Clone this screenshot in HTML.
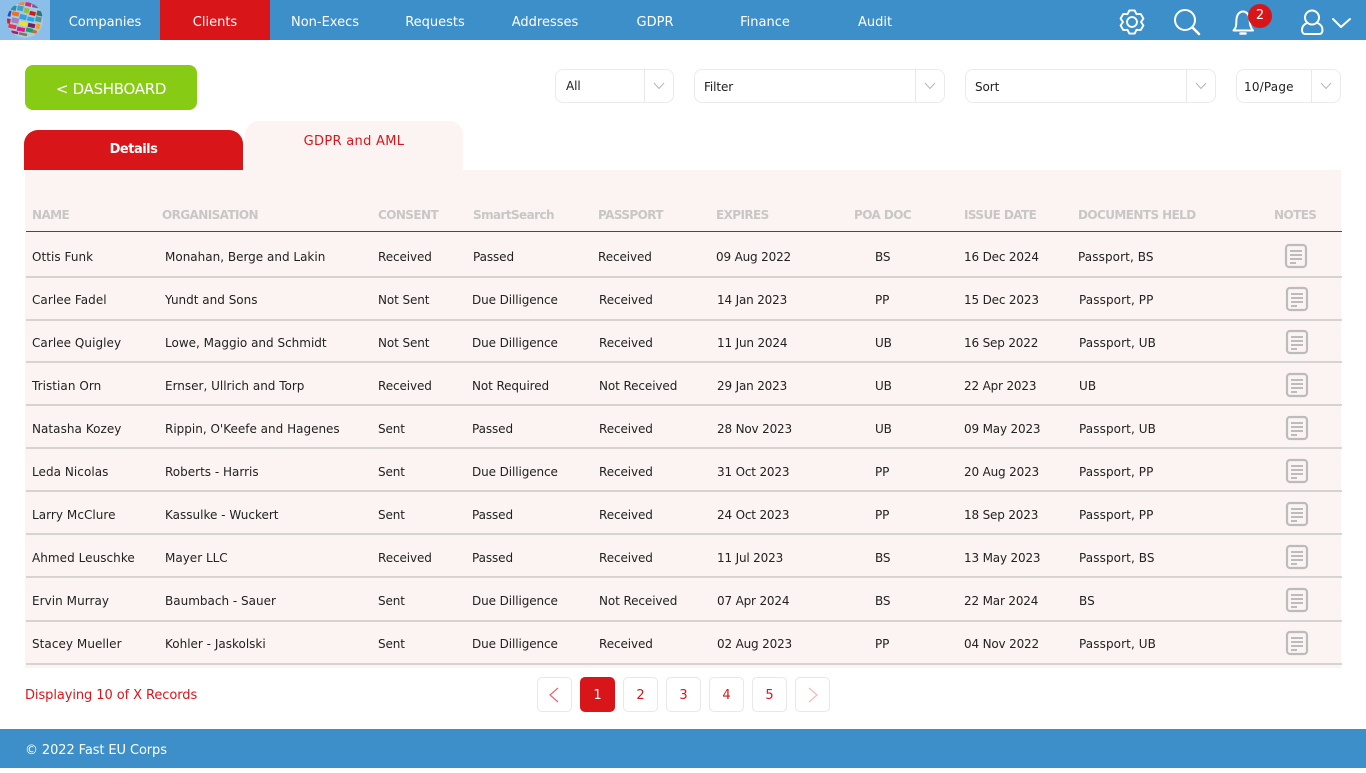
<!DOCTYPE html>
<html lang="en"><head><meta charset="utf-8"><title>GDPR and AML</title>
<style>
*{box-sizing:border-box}
html,body{margin:0;padding:0;width:1366px;height:768px;overflow:hidden;background:#fff;font-family:"DejaVu Sans","Liberation Sans",sans-serif;font-size:12px;color:#222}
.a,.t,.h,.n,.c{position:absolute;white-space:nowrap}
.n{top:0;height:40px;line-height:46px;color:#fff;font-size:13px;text-align:center;width:110px}
.h{top:208px;line-height:15px;font-size:12px;font-weight:bold;color:#c9c7c5;letter-spacing:-.58px}
.t{top:1px;line-height:16px;letter-spacing:-.1px}
.t.o{letter-spacing:0}
.t.m{letter-spacing:.05px}
.t.d{letter-spacing:-.17px}
.t.p{letter-spacing:.1px}
.sep{position:absolute;left:26px;width:1316px;height:2px;background:#d6d4d2}
.box{position:absolute;background:#fff;border:1px solid #ebebeb;border-radius:8px}
.div{position:absolute;width:1px;background:#e8e8e8}
.pg{position:absolute;top:677px;width:35px;height:35px;border:1px solid #e8e8e8;border-radius:5px;text-align:center;line-height:35px;color:#d8161a;font-size:13px;background:#fff}
svg{position:absolute;overflow:visible}
</style></head><body>
<div class="a" style="left:0;top:0;width:1366px;height:40px;background:#3c8fc8"></div>
<div class="a" style="left:0;top:0;width:50px;height:40px;background:#8bbfe9"></div>
<svg style="left:0;top:0" width="50" height="40" viewBox="0 0 50 40">
<defs><clipPath id="g"><circle cx="25" cy="20" r="18"/></clipPath></defs>
<g clip-path="url(#g)">
<circle cx="25" cy="20" r="18" fill="#a8cbe0"/>
<g transform="rotate(12 25 20)">
<rect x="15" y="2" width="6" height="4" fill="#e8883a"/><rect x="22" y="2" width="6" height="4" fill="#d6267a"/><rect x="29" y="2" width="6" height="4" fill="#7c5c9c"/>
<rect x="9" y="8" width="5" height="5" fill="#2a8fa0"/><rect x="15" y="7" width="6" height="5" fill="#3aa0d8"/><rect x="22" y="8" width="5" height="5" fill="#90c040"/><rect x="28" y="10" width="6" height="4" fill="#d8161a"/><rect x="35" y="8" width="6" height="5" fill="#31766f"/>
<rect x="6" y="14" width="4" height="6" fill="#1a50c8"/><rect x="11" y="14" width="7" height="4" fill="#f07020"/><rect x="19" y="15" width="7" height="5" fill="#3a9fe0"/><rect x="27" y="16" width="7" height="4" fill="#20a8e8"/><rect x="35" y="14" width="6" height="5" fill="#509898"/>
<rect x="6" y="22" width="5" height="5" fill="#d02040"/><rect x="12" y="20" width="7" height="5" fill="#a080c0"/><rect x="20" y="22" width="8" height="4" fill="#f4e020"/><rect x="29" y="22" width="7" height="4" fill="#702070"/><rect x="37" y="21" width="4" height="5" fill="#f0a020"/>
<rect x="10" y="27" width="8" height="4" fill="#f03050"/><rect x="19" y="28" width="8" height="4" fill="#e01890"/><rect x="28" y="27" width="7" height="4" fill="#20a060"/><rect x="35" y="28" width="4" height="3" fill="#e06020"/>
<rect x="14" y="33" width="7" height="2.500" fill="#a02070"/><rect x="22" y="33" width="8" height="2.500" fill="#8a7050"/>
</g></g></svg>
<div class="n" style="left:50px">Companies</div>
<div class="a" style="left:160px;top:0;width:110px;height:40px;background:#d8161a"></div>
<div class="n" style="left:160px">Clients</div>
<div class="n" style="left:270px">Non-Execs</div>
<div class="n" style="left:380px">Requests</div>
<div class="n" style="left:490px">Addresses</div>
<div class="n" style="left:600px">GDPR</div>
<div class="n" style="left:710px">Finance</div>
<div class="n" style="left:820px">Audit</div>
<svg style="left:1132px;top:22px" width="1" height="1"><g transform="scale(.95)"><path d="M-2.8-12.2L2.8-12.2L4.75-8.2L9.1-8.5L12-3.65L9.5 0L12 3.65L9.1 8.5L4.75 8.2L2.8 12.2L-2.8 12.2L-4.75 8.2L-9.1 8.5L-12 3.65L-9.5 0L-12-3.65L-9.1-8.5L-4.75-8.2Z" fill="none" stroke="#fff" stroke-width="2" stroke-linejoin="round"/><circle r="5.2" fill="none" stroke="#fff" stroke-width="2"/></g></svg>
<svg style="left:0;top:0" width="1366" height="40" fill="none" stroke="#fff" stroke-width="2" stroke-linecap="round" stroke-linejoin="round">
<circle cx="1185" cy="20" r="10"/><path d="M1192.5 27.5L1199 34" stroke-width="2.6"/>
<path d="M1233.5 30.5C1237 27 1236 24 1236.5 19C1237 14 1240 11.500 1243 11.500C1246 11.500 1249 14 1249.500 19C1250 24 1250 27 1253 30.500Z"/><path d="M1240.500 33.500H1245.500" stroke-width="2.500"/>
<circle cx="1312" cy="17.500" r="7"/><path d="M1307 23C1303.500 24.500 1302 27 1302 30C1302 33 1303.500 34 1305 34H1319C1321 34 1322.500 33 1322.500 30C1322.500 27 1321 24.500 1317.500 23"/>
<path d="M1333 19L1341 27L1350 19"/>
</svg>
<div class="a" style="left:1248px;top:4px;width:24px;height:24px;border-radius:50%;background:#d8161a;color:#fff;text-align:center;line-height:24px;font-size:13px">2</div>

<div class="a" style="left:25px;top:65px;width:172px;height:45px;background:#88cb14;border-radius:8px;color:#fff;text-align:center;line-height:48px;font-size:15px;letter-spacing:-.3px">&lt; DASHBOARD</div>

<div class="box" style="left:555px;top:69px;width:119px;height:34px"></div><div class="div" style="left:644px;top:70px;height:32px"></div>
<div class="box" style="left:694px;top:69px;width:251px;height:34px"></div><div class="div" style="left:915px;top:70px;height:32px"></div>
<div class="box" style="left:965px;top:69px;width:251px;height:34px"></div><div class="div" style="left:1186px;top:70px;height:32px"></div>
<div class="box" style="left:1236px;top:69px;width:105px;height:34px"></div><div class="div" style="left:1311px;top:70px;height:32px"></div>
<div class="t" style="left:566px;top:78px">All</div>
<div class="t" style="left:704px;top:79px">Filter</div>
<div class="t" style="left:975px;top:79px">Sort</div>
<div class="t" style="left:1244px;top:79px;letter-spacing:.2px">10/Page</div>
<svg style="left:0;top:0" width="1366" height="110" fill="none" stroke="#b5b5bd" stroke-width="1"><path d="M654 83L659 88.500L664 83M925 83L930 88.500L935 83M1196 83L1201 88.500L1206 83M1321 83L1326 88.500L1331 83"/></svg>

<div class="a" style="left:25px;top:170px;width:1316px;height:498px;background:#fbf4f2"></div>
<div class="a" style="left:245px;top:121px;width:218px;height:50px;background:#fbf4f2;border-radius:14px 14px 0 0;color:#d8161a;text-align:center;line-height:42px;font-size:13px;letter-spacing:.3px">GDPR and AML</div>
<div class="a" style="left:24px;top:130px;width:219px;height:40px;background:#d8161a;border-radius:14px 14px 0 0;color:#fff;text-align:center;line-height:40px;font-size:13px;font-weight:bold;letter-spacing:-.5px">Details</div>

<div class="h" style="left:32px">NAME</div><div class="h" style="left:162px">ORGANISATION</div><div class="h" style="left:378px">CONSENT</div><div class="h" style="left:473px;font-size:12px">SmartSearch</div><div class="h" style="left:598px">PASSPORT</div><div class="h" style="left:716px">EXPIRES</div><div class="h" style="left:854px">POA DOC</div><div class="h" style="left:964px">ISSUE DATE</div><div class="h" style="left:1078px">DOCUMENTS HELD</div><div class="h" style="left:1274px">NOTES</div>
<div class="a" style="left:26px;top:231px;width:1316px;height:1px;background:#1f5680"></div>

<div class="a" style="left:0;top:248px;width:1366px;height:16px"><span class="t m" style="left:32px">Ottis Funk</span><span class="t o" style="left:165px">Monahan, Berge and Lakin</span><span class="t" style="left:378px">Received</span><span class="t" style="left:473px">Passed</span><span class="t" style="left:598px">Received</span><span class="t d" style="left:716px">09 Aug 2022</span><span class="t" style="left:875px">BS</span><span class="t d" style="left:964px">16 Dec 2024</span><span class="t p" style="left:1078px">Passport, BS</span></div>
<div class="a" style="left:0;top:291px;width:1366px;height:16px"><span class="t m" style="left:32px">Carlee Fadel</span><span class="t o" style="left:165px">Yundt and Sons</span><span class="t" style="left:378px">Not Sent</span><span class="t" style="left:472px">Due Dilligence</span><span class="t" style="left:599px">Received</span><span class="t d" style="left:717px">14 Jan 2023</span><span class="t" style="left:875px">PP</span><span class="t d" style="left:964px">15 Dec 2023</span><span class="t p" style="left:1079px">Passport, PP</span></div>
<div class="a" style="left:0;top:334px;width:1366px;height:16px"><span class="t m" style="left:32px">Carlee Quigley</span><span class="t o" style="left:165px">Lowe, Maggio and Schmidt</span><span class="t" style="left:378px">Not Sent</span><span class="t" style="left:472px">Due Dilligence</span><span class="t" style="left:599px">Received</span><span class="t d" style="left:717px">11 Jun 2024</span><span class="t" style="left:875px">UB</span><span class="t d" style="left:964px">16 Sep 2022</span><span class="t p" style="left:1079px">Passport, UB</span></div>
<div class="a" style="left:0;top:377px;width:1366px;height:16px"><span class="t m" style="left:32px">Tristian Orn</span><span class="t o" style="left:165px">Ernser, Ullrich and Torp</span><span class="t" style="left:378px">Received</span><span class="t" style="left:472px">Not Required</span><span class="t" style="left:599px">Not Received</span><span class="t d" style="left:717px">29 Jan 2023</span><span class="t" style="left:875px">UB</span><span class="t d" style="left:964px">22 Apr 2023</span><span class="t p" style="left:1079px">UB</span></div>
<div class="a" style="left:0;top:420px;width:1366px;height:16px"><span class="t m" style="left:32px">Natasha Kozey</span><span class="t o" style="left:165px">Rippin, O'Keefe and Hagenes</span><span class="t" style="left:378px">Sent</span><span class="t" style="left:472px">Passed</span><span class="t" style="left:599px">Received</span><span class="t d" style="left:717px">28 Nov 2023</span><span class="t" style="left:875px">UB</span><span class="t d" style="left:964px">09 May 2023</span><span class="t p" style="left:1079px">Passport, UB</span></div>
<div class="a" style="left:0;top:463px;width:1366px;height:16px"><span class="t m" style="left:32px">Leda Nicolas</span><span class="t o" style="left:165px">Roberts - Harris</span><span class="t" style="left:378px">Sent</span><span class="t" style="left:472px">Due Dilligence</span><span class="t" style="left:599px">Received</span><span class="t d" style="left:717px">31 Oct 2023</span><span class="t" style="left:875px">PP</span><span class="t d" style="left:964px">20 Aug 2023</span><span class="t p" style="left:1079px">Passport, PP</span></div>
<div class="a" style="left:0;top:506px;width:1366px;height:16px"><span class="t m" style="left:32px">Larry McClure</span><span class="t o" style="left:165px">Kassulke - Wuckert</span><span class="t" style="left:378px">Sent</span><span class="t" style="left:472px">Passed</span><span class="t" style="left:599px">Received</span><span class="t d" style="left:717px">24 Oct 2023</span><span class="t" style="left:875px">PP</span><span class="t d" style="left:964px">18 Sep 2023</span><span class="t p" style="left:1079px">Passport, PP</span></div>
<div class="a" style="left:0;top:549px;width:1366px;height:16px"><span class="t m" style="left:32px">Ahmed Leuschke</span><span class="t o" style="left:165px">Mayer LLC</span><span class="t" style="left:378px">Received</span><span class="t" style="left:472px">Passed</span><span class="t" style="left:599px">Received</span><span class="t d" style="left:717px">11 Jul 2023</span><span class="t" style="left:875px">BS</span><span class="t d" style="left:964px">13 May 2023</span><span class="t p" style="left:1079px">Passport, BS</span></div>
<div class="a" style="left:0;top:592px;width:1366px;height:16px"><span class="t m" style="left:32px">Ervin Murray</span><span class="t o" style="left:165px">Baumbach - Sauer</span><span class="t" style="left:378px">Sent</span><span class="t" style="left:472px">Due Dilligence</span><span class="t" style="left:599px">Not Received</span><span class="t d" style="left:717px">07 Apr 2024</span><span class="t" style="left:875px">BS</span><span class="t d" style="left:964px">22 Mar 2024</span><span class="t p" style="left:1079px">BS</span></div>
<div class="a" style="left:0;top:635px;width:1366px;height:16px"><span class="t m" style="left:32px">Stacey Mueller</span><span class="t o" style="left:165px">Kohler - Jaskolski</span><span class="t" style="left:378px">Sent</span><span class="t" style="left:472px">Due Dilligence</span><span class="t" style="left:599px">Received</span><span class="t d" style="left:717px">02 Aug 2023</span><span class="t" style="left:875px">PP</span><span class="t d" style="left:964px">04 Nov 2022</span><span class="t p" style="left:1079px">Passport, UB</span></div>

<div class="sep" style="top:276px"></div><div class="sep" style="top:319px"></div><div class="sep" style="top:361px"></div><div class="sep" style="top:404px"></div><div class="sep" style="top:447px"></div><div class="sep" style="top:490px"></div><div class="sep" style="top:533px"></div><div class="sep" style="top:576px"></div><div class="sep" style="top:620px"></div><div class="sep" style="top:663px"></div>

<svg style="left:0;top:0" width="1366" height="768" fill="none" stroke="#bcbcbc">
<defs><g id="nt"><rect x="1" y="1" width="20" height="22" rx="3" stroke-width="2.200"/><path d="M5 7H17M5 11H17M5 15H17M5 19H11" stroke-width="2"/></g></defs>
<use href="#nt" x="1285" y="244"/><use href="#nt" x="1286" y="287"/><use href="#nt" x="1286" y="330"/><use href="#nt" x="1286" y="373"/><use href="#nt" x="1286" y="416"/><use href="#nt" x="1286" y="459"/><use href="#nt" x="1286" y="502"/><use href="#nt" x="1286" y="545"/><use href="#nt" x="1286" y="588"/><use href="#nt" x="1286" y="631"/>
</svg>

<div class="a" style="left:25px;top:687px;line-height:18px;color:#d8161a;font-size:13px;letter-spacing:-.08px">Displaying 10 of X Records</div>
<div class="pg" style="left:537px"></div>
<div class="pg" style="left:580px;background:#d8161a;border-color:#d8161a;color:#fff">1</div>
<div class="pg" style="left:623px">2</div><div class="pg" style="left:666px">3</div><div class="pg" style="left:709px">4</div><div class="pg" style="left:752px">5</div>
<div class="pg" style="left:795px"></div>
<svg style="left:0;top:660px" width="1366" height="70" fill="none"><path d="M558 28L550 35L558 42" stroke="#e3686b" stroke-width="1.200"/><path d="M809 28L817 35L809 42" stroke="#f3b9ba" stroke-width="1.200"/></svg>

<div class="a" style="left:0;top:729px;width:1366px;height:39px;background:#3c8fc8;color:#fff;line-height:44px;padding-left:25px;font-size:13px;letter-spacing:-.1px">© 2022 Fast EU Corps</div>
</body></html>
